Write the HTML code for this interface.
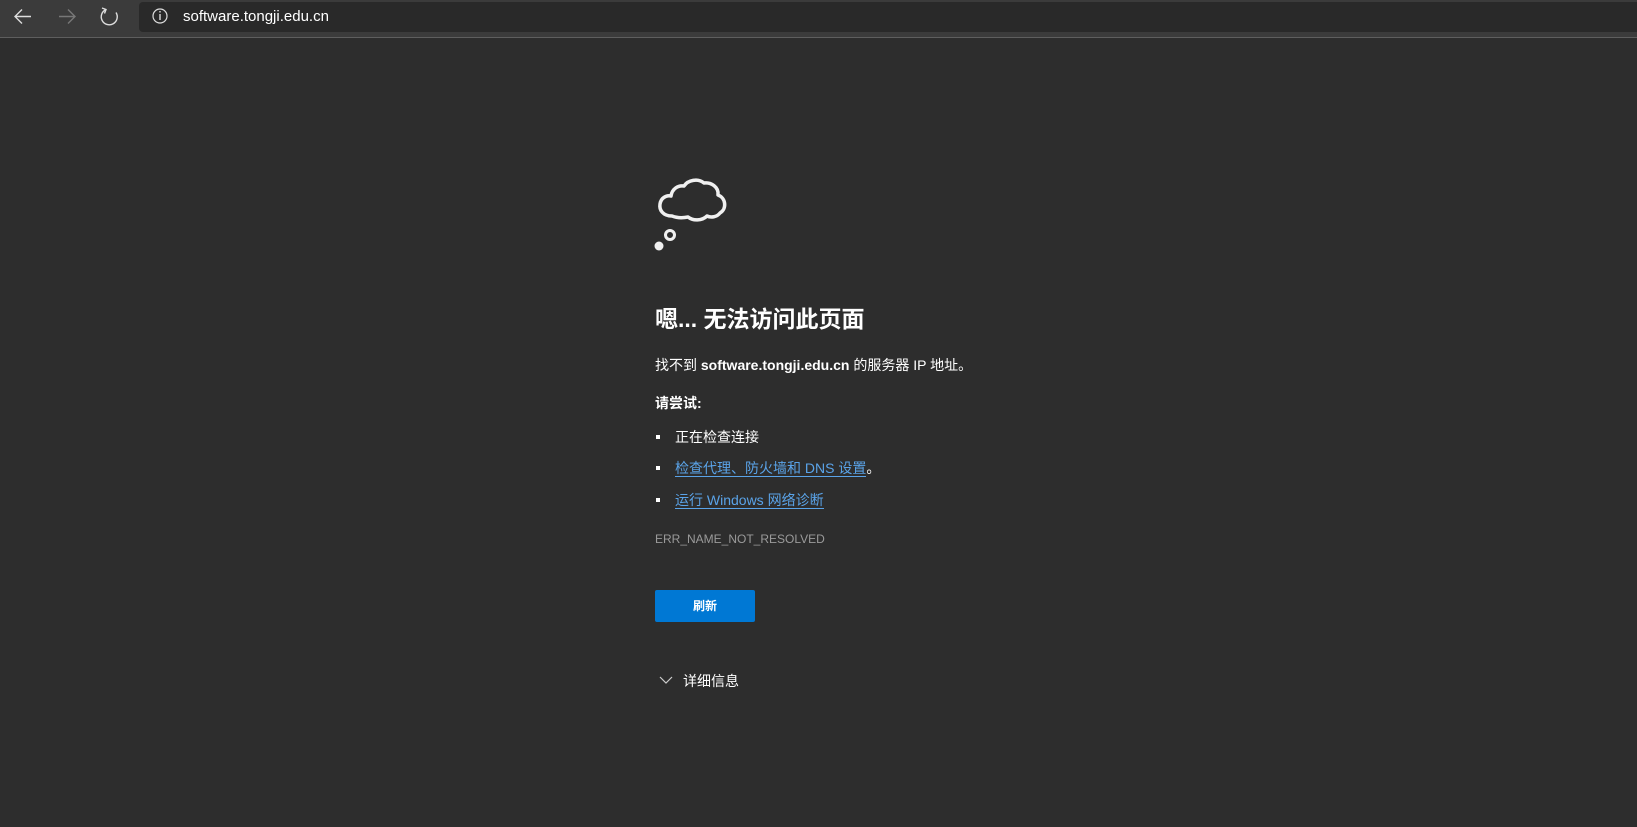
<!DOCTYPE html>
<html><head><meta charset="utf-8"><style>
*{margin:0;padding:0;box-sizing:border-box}
body{width:1637px;height:827px;background:#2d2d2d;font-family:"Segoe UI","Liberation Sans","Noto Sans CJK SC",sans-serif;color:#fff;position:relative;overflow:hidden}
.tb{position:absolute;left:0;top:0;width:1637px;height:38px;background:#3b3b3b;border-bottom:1px solid #5e5e5e}
.addr{position:absolute;left:139px;top:2px;right:0;height:30px;background:#292929;border-radius:4px 0 0 4px}
.url{position:absolute;left:183px;top:8px;font-size:15px;color:#fff;font-family:"Liberation Sans",sans-serif}
.abs{position:absolute}
.t{position:absolute;left:655px;white-space:nowrap}
a{color:#5aa3e8;text-decoration:none;border-bottom:1px solid #5aa3e8}
</style></head><body>
<div class="tb"><div class="addr"></div></div>
<svg class="abs" style="left:0;top:0" width="180" height="38">
<g fill="none" stroke="#ddd" stroke-width="1.4">
<path d="M31 16.5H15M22 9.5l-7 7 7 7"/>
<path d="M59 16.5h16M68 9.5l7 7-7 7" stroke="#777"/>
<path d="M106 9.5A8 8 0 1 0 116 12.5" /><path d="M102 8l4 1.5-1.5 4"/>
<circle cx="160" cy="16" r="7" stroke-width="1.2"/>
</g>
<rect x="159.3" y="14" width="1.4" height="6" fill="#ddd"/><rect x="159.3" y="11" width="1.4" height="1.5" fill="#ddd"/>
</svg>
<div class="url">software.tongji.edu.cn</div>
<svg class="abs" style="top:176px;left:652px" width="85" height="80">
<path d="M20 40c-9 0-13-6-12-12 1-6 6-9 11-8 1-7 7-11 13-10 4-6 14-8 20-3 7-1 15 4 14 12 8 3 9 14 2 18-3 4-9 5-13 3-5 5-14 5-19 1-5 1-11 1-16-1z" fill="none" stroke="#f0f0f0" stroke-width="3.5" stroke-linejoin="round"/>
<circle cx="18" cy="59" r="4.5" fill="none" stroke="#f0f0f0" stroke-width="3"/>
<circle cx="7" cy="70" r="4.5" fill="#f0f0f0"/>
</svg>
<div class="t" style="top:300px;font-size:23px;font-weight:bold">嗯... 无法访问此页面</div>
<div class="t" style="top:355px;font-size:14px">找不到 <b>software.tongji.edu.cn</b> 的服务器 IP 地址。</div>
<div class="t" style="top:393px;font-size:14px;font-weight:bold">请尝试:</div>
<div class="abs" style="left:656px;top:435px;width:4px;height:4px;background:#fff"></div>
<div class="abs" style="left:656px;top:466px;width:4px;height:4px;background:#fff"></div>
<div class="abs" style="left:656px;top:498px;width:4px;height:4px;background:#fff"></div>
<div class="t" style="left:675px;top:427px;font-size:14px">正在检查连接</div>
<div class="t" style="left:675px;top:458px;font-size:14px"><a>检查代理、防火墙和 DNS 设置</a>。</div>
<div class="t" style="left:675px;top:490px;font-size:14px"><a>运行 Windows 网络诊断</a></div>
<div class="t" style="top:532px;font-size:12px;color:#9a9a9a">ERR_NAME_NOT_RESOLVED</div>
<div class="abs" style="left:655px;top:590px;width:100px;height:32px;background:#0078d4;border-radius:2px;font-size:12px;font-weight:bold;text-align:center;line-height:32px">刷新</div>
<svg class="abs" style="left:659px;top:675px" width="16" height="10"><path d="M1 2l6 6 6-6" fill="none" stroke="#ccc" stroke-width="1.2"/></svg>
<div class="t" style="left:683px;top:671px;font-size:14px">详细信息</div>
</body></html>
